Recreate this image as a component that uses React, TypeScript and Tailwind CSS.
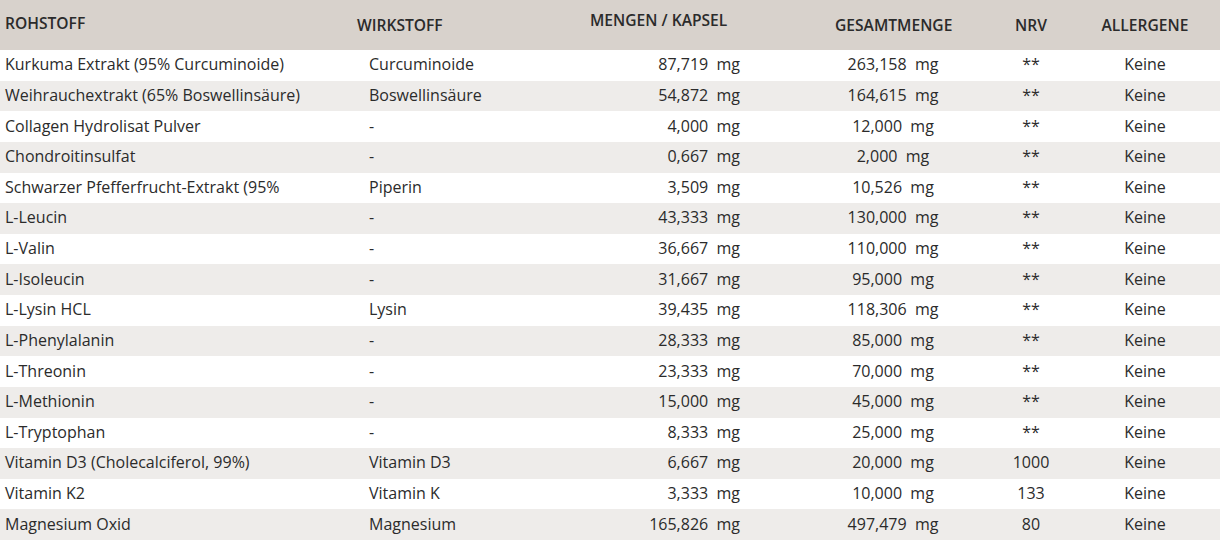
import React from "react";

type Row = [string, string, string, string, string];

const rows: Row[] = [
  ["Kurkuma Extrakt (95% Curcuminoide)", "Curcuminoide", "87,719", "263,158", "**"],
  ["Weihrauchextrakt (65% Boswellinsäure)", "Boswellinsäure", "54,872", "164,615", "**"],
  ["Collagen Hydrolisat Pulver", "-", "4,000", "12,000", "**"],
  ["Chondroitinsulfat", "-", "0,667", "2,000", "**"],
  ["Schwarzer Pfefferfrucht-Extrakt (95%", "Piperin", "3,509", "10,526", "**"],
  ["L-Leucin", "-", "43,333", "130,000", "**"],
  ["L-Valin", "-", "36,667", "110,000", "**"],
  ["L-Isoleucin", "-", "31,667", "95,000", "**"],
  ["L-Lysin HCL", "Lysin", "39,435", "118,306", "**"],
  ["L-Phenylalanin", "-", "28,333", "85,000", "**"],
  ["L-Threonin", "-", "23,333", "70,000", "**"],
  ["L-Methionin", "-", "15,000", "45,000", "**"],
  ["L-Tryptophan", "-", "8,333", "25,000", "**"],
  ["Vitamin D3 (Cholecalciferol, 99%)", "Vitamin D3", "6,667", "20,000", "1000"],
  ["Vitamin K2", "Vitamin K", "3,333", "10,000", "133"],
  ["Magnesium Oxid", "Magnesium", "165,826", "497,479", "80"],
];

const cols = "grid grid-cols-[357px_218px_219px_198px_78px_150px]";

export default function App() {
  return (
    <div
      className="w-[1220px] h-[540px] overflow-hidden bg-white text-[#2b2b2b]"
      style={{ fontFamily: '"Open Sans", "Noto Sans", sans-serif' }}
    >
      <div className={`${cols} h-[50px] bg-[#d8d2cc] text-[15.6px] font-semibold uppercase leading-[20px]`}>
        <div className="pl-[5px] pt-[13px]">Rohstoff</div>
        <div className="pt-[15px]">Wirkstoff</div>
        <div className="pl-[15px] pt-[10px]">Mengen / Kapsel</div>
        <div className="pl-[41px] pt-[15px]">Gesamtmenge</div>
        <div className="text-center pt-[15px]">NRV</div>
        <div className="text-center pt-[15px]">Allergene</div>
      </div>
      {rows.map((r, i) => (
        <div
          key={i}
          className={`${cols} h-[30.625px] items-center text-[16px] leading-[20px] pb-[2px] ${i % 2 === 1 ? "bg-[#eeecea]" : "bg-white"}`}
        >
          <div className="pl-[5px] whitespace-nowrap">{r[0]}</div>
          <div className="pl-[12px] whitespace-nowrap">{r[1]}</div>
          <div className="pr-[54px] text-right whitespace-pre">{r[2]}  mg</div>
          <div className="text-center whitespace-pre">{r[3]}  mg</div>
          <div className="text-center">{r[4]}</div>
          <div className="text-center">Keine</div>
        </div>
      ))}
    </div>
  );
}
